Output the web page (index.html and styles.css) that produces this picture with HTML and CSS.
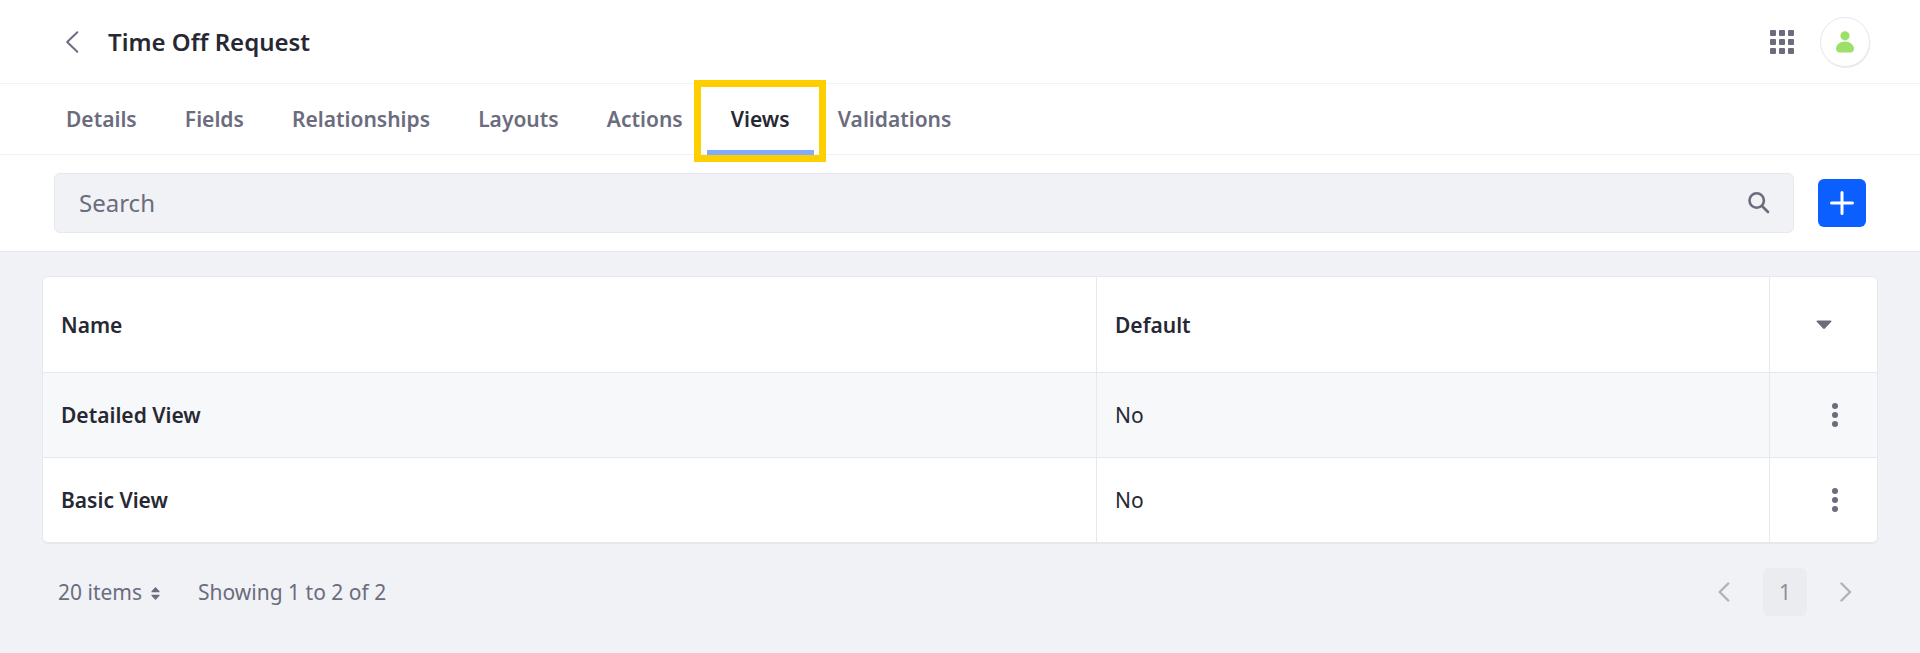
FILE: index.html
```html
<!DOCTYPE html>
<html lang="en">
<head>
<meta charset="utf-8">
<title>Time Off Request</title>
<link rel="stylesheet" href="styles.css">
</head>
<body>
<header class="header">
  <svg class="back" width="14" height="24" viewBox="0 0 14 24"><path d="M12.300 2.200 2.200 12l10.100 9.800"/></svg>
  <h1 class="title">Time Off Request</h1>
  <svg class="apps" width="24" height="24" viewBox="0 0 24 24"><rect width="6" height="6" rx="1"/><rect x="9" width="6" height="6" rx="1"/><rect x="18" width="6" height="6" rx="1"/><rect y="9" width="6" height="6" rx="1"/><rect x="9" y="9" width="6" height="6" rx="1"/><rect x="18" y="9" width="6" height="6" rx="1"/><rect y="18" width="6" height="6" rx="1"/><rect x="9" y="18" width="6" height="6" rx="1"/><rect x="18" y="18" width="6" height="6" rx="1"/></svg>
  <div class="avatar"><svg width="18" height="22" viewBox="0 0 18 22"><circle cx="9" cy="4.800" r="4.600"/><path d="M9 10.600c5 0 9 3.500 9 7.400C18 20.500 16 21.600 13.500 21.600h-9C2 21.600 0 20.500 0 18 0 14.100 4 10.600 9 10.600z"/></svg></div>
</header>
<nav class="tabs">
  <a class="tab">Details</a>
  <a class="tab">Fields</a>
  <a class="tab">Relationships</a>
  <a class="tab">Layouts</a>
  <a class="tab">Actions</a>
  <a class="tab active">Views<span class="highlight"></span></a>
  <a class="tab">Validations</a>
</nav>
<div class="toolbar">
  <div class="search">
    <span>Search</span>
    <svg width="22" height="22" viewBox="0 0 22 22"><circle cx="8.700" cy="8.500" r="7.200"/><path d="m14 14 6 6"/></svg>
  </div>
  <button class="add"><svg width="24" height="24" viewBox="0 0 24 24"><path d="M12 1.500v21M1.500 12h21"/></svg></button>
</div>
<main class="content">
  <div class="table">
    <div class="row head">
      <div class="cell strong">Name</div>
      <div class="cell strong">Default</div>
      <div class="cell center"><svg width="16" height="10" viewBox="0 0 16 10"><path d="M1.500.500h13c1 0 1.300.900.600 1.600L8.900 8.600q-.900.800-1.800 0L.900 2.100C.200 1.400.500.500 1.500.500z"/></svg></div>
    </div>
    <div class="row striped">
      <div class="cell strong">Detailed View</div>
      <div class="cell">No</div>
      <div class="cell actions"><svg width="6" height="24" viewBox="0 0 6 24"><circle cx="3" cy="3" r="3"/><circle cx="3" cy="12" r="3"/><circle cx="3" cy="21" r="3"/></svg></div>
    </div>
    <div class="row">
      <div class="cell strong">Basic View</div>
      <div class="cell">No</div>
      <div class="cell actions"><svg width="6" height="24" viewBox="0 0 6 24"><circle cx="3" cy="3" r="3"/><circle cx="3" cy="12" r="3"/><circle cx="3" cy="21" r="3"/></svg></div>
    </div>
  </div>
  <footer class="pagination">
    <span class="per-page">20 items</span>
    <svg class="sort" width="9" height="13" viewBox="0 0 9 13"><path d="M4.500 0 8.500 4.200V5.200H.500V4.200zM.500 7.800h8v1L4.500 13l-4-4.200z"/></svg>
    <span class="results">Showing 1 to 2 of 2</span>
    <svg class="arrow" width="12" height="20" viewBox="0 0 12 20"><path d="M10.200 1.500 1.700 10l8.500 8.500"/></svg>
    <span class="page">1</span>
    <svg class="arrow" width="12" height="20" viewBox="0 0 12 20"><path d="M1.500 1.500 10 10l-8.500 8.500"/></svg>
  </footer>
</main>
</body>
</html>
```
FILE: styles.css
```css
* { box-sizing: border-box; }
body {
  margin: 0;
  min-height: 653px;
  background: #f1f2f5;
  color: #272833;
  font: 21px/32px "Noto Sans", sans-serif;
}
svg { display: block; flex: none; fill: #6b6c7e; }
.header {
  display: flex;
  align-items: center;
  height: 84px;
  padding: 0 50px 0 65px;
  background: #fff;
  border-bottom: 1px solid #f1f2f5;
}
.back { fill: none; stroke: #6b6c7e; stroke-width: 2; stroke-linecap: round; stroke-linejoin: round; }
.title { flex: 1; margin: 0 0 0 29px; font-size: 24px; font-weight: 600; }
.apps { margin-right: 26px; }
.avatar {
  display: flex;
  align-items: center;
  justify-content: center;
  width: 50px;
  height: 50px;
  border: 1px solid #e7e7ed;
  border-radius: 50%;
  box-shadow: .5px 1px 0 #e7e7ed;
}
.avatar svg { fill: #9be169; }
.tabs {
  display: flex;
  height: 71px;
  padding-left: 42px;
  background: #fff;
  border-bottom: 1px solid #f1f2f5;
}
.tab {
  position: relative;
  margin-right: .15px;
  padding: 19px 24px 0;
  color: #6b6c7e;
  font-weight: 600;
}
.active { margin-bottom: -1px; color: #272833; box-shadow: inset 0 -5px #80acff; }
.highlight {
  position: absolute;
  inset: -4.500px -12.800px -7px -13.200px;
  border: 7px solid #ffce00;
}
.toolbar {
  display: flex;
  align-items: center;
  gap: 24px;
  height: 97px;
  padding: 0 54px;
  background: #fff;
  border-bottom: 1px solid #e7e7ed;
}
.search {
  display: flex;
  flex: 1;
  align-items: center;
  justify-content: space-between;
  height: 60px;
  padding: 0 23px 0 24px;
  background: #f1f2f5;
  border: 1px solid #e7e7ed;
  border-radius: 6px;
  color: #6b6c7e;
  font-size: 24px;
}
.search svg { fill: none; stroke: #6b6c7e; stroke-width: 2.6; stroke-linecap: round; }
.add {
  display: flex;
  align-items: center;
  justify-content: center;
  width: 48px;
  height: 48px;
  padding: 0;
  background: #0b5fff;
  border: 0;
  border-radius: 6px;
}
.add svg { fill: none; stroke: #fff; stroke-width: 3; stroke-linecap: round; }
.content { padding: 24px 42px 0; }
.table {
  overflow: hidden;
  background: #fff;
  border: 1px solid #e7e7ed;
  border-bottom-width: 2px;
  border-radius: 6px;
}
.row {
  display: grid;
  grid-template-columns: 1054px 673px 1fr;
  height: 85px;
  border-bottom: 1px solid #e7e7ed;
}
.row:last-child { height: 84px; border-bottom: 0; }
.head { height: 96px; }
.striped { background: #f7f8f9; }
.cell { display: flex; align-items: center; padding: 0 18px; border-right: 1px solid #e7e7ed; }
.cell:last-child { border-right: 0; }
.strong { font-weight: 600; }
.center { justify-content: center; }
.actions { justify-content: flex-end; padding-right: 39px; }
.pagination {
  display: flex;
  align-items: center;
  height: 48px;
  margin-top: 24px;
  padding: 0 26px 0 16px;
  color: #6b6c7e;
}
.sort { margin: 2px 0 0 9px; }
.results { flex: 1; margin-left: 38px; }
.arrow { fill: none; stroke: #b0b1bd; stroke-width: 2.4; stroke-linecap: round; stroke-linejoin: round; }
.page {
  width: 44px;
  height: 48px;
  margin: 0 33px;
  background: #ebecef;
  border-radius: 6px;
  color: #8d8e96;
  line-height: 48px;
  text-align: center;
}
```
